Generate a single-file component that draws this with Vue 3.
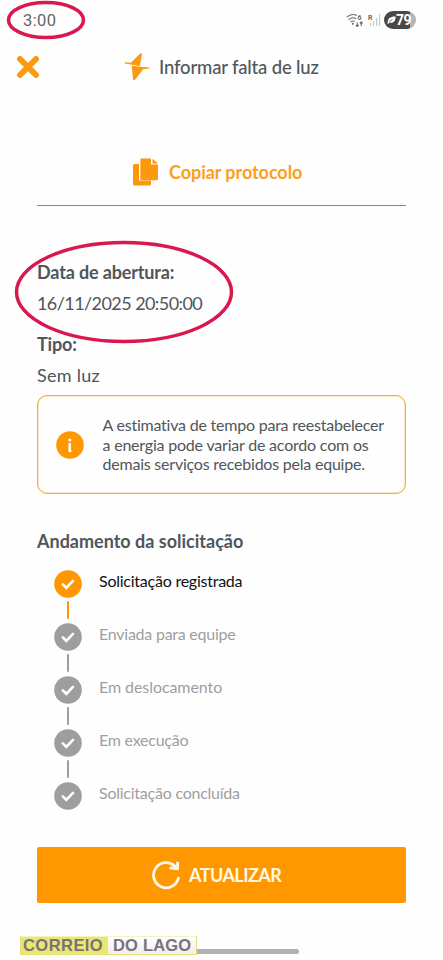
<template>
  <div class="screen">
    <div class="status-bar">
      <span class="time">3:00</span>
      <div class="status-icons">
        <svg class="wifi" width="19" height="15" viewBox="0 0 19 15" fill="none" stroke="#6b6b6b" stroke-width="1.1">
          <path d="M.8 4.2C3.600 1.500 7.800 1 11 2.600M2.600 6.600c2-1.900 5.200-2.200 7.600-.9M4.500 8.900c1.300-1 2.900-1.100 4.200-.5" />
          <circle cx="6.800" cy="10.800" r=".5" fill="#6b6b6b" />
          <path d="M11.300 9.500v4M9.900 12l1.400 1.500 1.400-1.500M15.200 13v-4M13.800 10.400l1.400-1.500 1.400 1.500" />
          <text class="tiny" x="11.600" y="6.600">6</text>
        </svg>
        <svg class="signal" width="13" height="14" viewBox="0 0 13 14" fill="#c9c9c9">
          <path d="M2 10h1.200v3H2zM5 8h1.200v5H5zM8 5h1.200v8H8zM11 1h1.200v12H11z" />
          <text class="tiny" x="0" y="6.500">R</text>
        </svg>
        <div class="battery">
          <svg width="9" height="10" viewBox="0 0 10 10">
            <path d="M1 6.500C1 2.500 4.500 1.200 9.600 1 9.600 6 7 9 3.200 7.700L1.300 9.300.3 8.500z" fill="#fff" />
            <path d="M2.600 6.800 6 4.400" stroke="#484848" stroke-width=".9" />
          </svg>
          <span>79</span>
        </div>
      </div>
    </div>

    <header class="header">
      <button class="close" @click="visible = false">
        <svg width="24" height="24" viewBox="0 0 24 24" stroke="#fb990f" stroke-width="6">
          <path d="M4 4 20 20M20 4 4 20" stroke-linecap="round" />
        </svg>
      </button>
      <svg class="bolt" width="26" height="28" viewBox="0 0 26 28" fill="#fb990f">
        <path d="M.8 9.200 7 9.800 16.200.6q1.900-.8 1.700 1.200L15.900 13 .8 10.500z" />
        <path d="M7.600 12.600 15.900 13.800 25.200 14.400v1.200L19.200 16.200 10.800 26.900q-1.600 1.100-1.700-.9z" />
      </svg>
      <h1>Informar falta de luz</h1>
    </header>

    <main class="content">
      <button class="copy">
        <svg width="26" height="29" viewBox="0 0 26 29" fill="#fc980b">
          <path d="M1.500 6H6v16.500h12V26a1.500 1.500 0 0 1-1.500 1.500h-15A1.500 1.500 0 0 1 0 26V7.500A1.500 1.500 0 0 1 1.500 6z" />
          <path d="M8.700.5H18v6h7V21a1.300 1.300 0 0 1-1.300 1.300h-15A1.300 1.300 0 0 1 7.400 21V1.800A1.300 1.300 0 0 1 8.700.5z" />
          <path d="M19.500.7 25 5.500h-5.500z" />
        </svg>
        <span>Copiar protocolo</span>
      </button>

      <section class="details">
        <strong class="label-date">Data de abertura:</strong>
        <p class="date">16/11/2025 20:50:00</p>
        <strong class="label-type">Tipo:</strong>
        <p class="type">Sem luz</p>
        <svg class="mark mark-date" width="220" height="106" viewBox="0 0 220 106">
          <ellipse cx="110" cy="53" rx="107.500" ry="49.500" />
        </svg>
      </section>

      <section class="notice">
        <svg width="28" height="28" viewBox="0 0 28 28">
          <circle cx="14" cy="14" r="13.800" fill="#ff9800" />
          <circle cx="13.800" cy="9" r="1.500" fill="#fff" />
          <path d="M12.300 12.200h2.700v7.300h.5V21h-3v-7.300h-.2z" fill="#fff" />
        </svg>
        <p>
          <span class="n1">A estimativa de tempo para reestabelecer</span>
          <span class="n2">a energia pode variar de acordo com os</span>
          <span class="n3">demais serviços recebidos pela equipe.</span>
        </p>
      </section>

      <h2>Andamento da solicitação</h2>

      <ul class="steps">
        <li v-for="step in steps" :key="step.id" :class="[step.id, { done: step.done }]">
          <div class="rail">
            <svg width="28" height="28" viewBox="0 0 28 28">
              <circle cx="14" cy="14" r="13.800" fill="currentColor" />
              <path d="M8.800 14.400 12.300 17.800 19 10.900" fill="none" stroke="#fff" stroke-width="2.600" stroke-linecap="round" />
            </svg>
            <i></i>
          </div>
          <span>{{ step.text }}</span>
        </li>
      </ul>

      <button class="refresh">
        <svg width="30" height="30" viewBox="0 0 30 30" fill="none" stroke="#fff8e6" stroke-width="2.800">
          <path d="M23.800 6A12.600 12.600 0 1 0 27.400 18.200" stroke-linecap="round" />
          <path d="M26.600 1.800v7l-8.200-1" stroke-linejoin="round" />
          <path d="M21.500 4.500l4 4" />
        </svg>
        <span>ATUALIZAR</span>
      </button>
    </main>

    <svg class="mark mark-time" width="80" height="40" viewBox="0 0 80 40">
      <ellipse cx="40" cy="20" rx="37.500" ry="17.500" />
    </svg>
    <div class="home-bar"></div>
    <div class="watermark"><span class="w1">CORREIO</span><span class="w2">DO LAGO</span></div>
  </div>
</template>

<script setup>
import { ref } from 'vue'

const visible = ref(true)

const steps = ref([
  { id: 'registered', text: 'Solicitação registrada', done: true },
  { id: 'sent', text: 'Enviada para equipe', done: false },
  { id: 'moving', text: 'Em deslocamento', done: false },
  { id: 'running', text: 'Em execução', done: false },
  { id: 'finished', text: 'Solicitação concluída', done: false }
])
</script>

<style>
body {
  margin: 0;
  background: #fefefe;
}
</style>

<style scoped>
.screen {
  position: relative;
  width: 443px;
  height: 960px;
  overflow: hidden;
  background: #fefefe;
  color: #50565b;
  font-family: Lato, "Liberation Sans", sans-serif;
  font-variant-ligatures: none;
}

button {
  padding: 0;
  border: none;
  background: none;
  font-family: inherit;
  cursor: pointer;
}

h1,
h2,
p,
ul {
  margin: 0;
  padding: 0;
}

svg {
  display: block;
  flex-shrink: 0;
}

.status-bar {
  display: flex;
  justify-content: space-between;
  align-items: center;
  height: 40px;
  padding: 0 27px 0 23px;
}

.time {
  font-family: Roboto, sans-serif;
  font-size: 16.5px;
  letter-spacing: 0.4px;
  color: #666;
}

.status-icons {
  display: flex;
  align-items: center;
  gap: 3px;
}

.tiny {
  font: bold 7px Roboto, sans-serif;
  fill: #6b6b6b;
  stroke: none;
}

.battery {
  display: flex;
  align-items: center;
  box-sizing: border-box;
  width: 32px;
  height: 18px;
  padding-left: 3px;
  border-radius: 9px;
  background: linear-gradient(90deg, #484848 80%, #b5b5b5 80%);
  color: #fff;
  font: bold 14px Roboto, sans-serif;
  letter-spacing: -0.5px;
}

.header {
  display: flex;
  align-items: center;
  height: 54px;
  padding-left: 16px;
}

.bolt {
  margin-left: 84px;
}

h1 {
  margin-left: 9px;
  font-size: 18.5px;
  font-weight: 500;
  letter-spacing: -0.17px;
  white-space: nowrap;
}

.content {
  display: flex;
  flex-direction: column;
  width: 369px;
  margin-left: 37px;
}

.copy {
  display: flex;
  align-items: center;
  gap: 10px;
  height: 67px;
  margin-top: 45px;
  padding-left: 96px;
  border-bottom: 1px solid #888;
  color: #fca01c;
  font-size: 18px;
  font-weight: bold;
  letter-spacing: -0.05px;
}

.details {
  position: relative;
  display: flex;
  flex-direction: column;
  align-items: flex-start;
  box-sizing: border-box;
  height: 189px;
  padding-top: 51px;
  font-size: 18px;
  line-height: 31px;
}

.label-date {
  letter-spacing: -0.15px;
}

.label-type {
  margin-top: 10px;
  letter-spacing: -0.15px;
}

.details p {
  white-space: nowrap;
}

.date {
  letter-spacing: -0.57px;
}

.type {
  letter-spacing: 0.25px;
}

.notice {
  display: flex;
  align-items: center;
  gap: 18.5px;
  box-sizing: border-box;
  height: 99px;
  padding-left: 18px;
  border: 1px solid #eeb03f;
  border-radius: 10px;
  box-shadow: inset 0 0 0 0.5px #f5cf88;
}

.notice p {
  display: flex;
  flex-direction: column;
  align-items: flex-start;
  font-size: 16px;
  line-height: 19.5px;
  white-space: nowrap;
}

.n1 {
  letter-spacing: -0.22px;
}

.n2 {
  letter-spacing: -0.2px;
}

.n3 {
  letter-spacing: -0.22px;
}

h2 {
  align-self: flex-start;
  margin-top: 35px;
  font-size: 18px;
  line-height: 24px;
}

.steps {
  margin-top: 17px;
  padding-left: 17px;
  list-style: none;
}

.steps li {
  display: flex;
  gap: 17px;
  height: 53px;
  color: #9e9e9e;
  letter-spacing: -0.24px;
}

.steps .moving {
  letter-spacing: -0.07px;
}

.steps li > span {
  align-self: flex-start;
  font-size: 16px;
  line-height: 22px;
}

.steps .done {
  color: #ff9800;
}

.steps .done > span {
  color: #111;
}

.rail i {
  display: block;
  width: 2.5px;
  height: 18px;
  margin: 3px auto 0;
  border-radius: 1px;
  background: currentColor;
}

.steps li:last-child i {
  display: none;
}

.refresh {
  display: flex;
  align-items: center;
  gap: 8px;
  height: 56px;
  margin-top: 12px;
  padding-left: 114px;
  border-radius: 2px;
  background: #ff9800;
  color: #fff8e6;
  font-size: 18px;
  font-weight: bold;
  letter-spacing: -0.55px;
}

.mark {
  position: absolute;
  fill: none;
  stroke: #d9184f;
  stroke-width: 3.5;
}

.mark-time {
  left: 6px;
  top: 0;
}

.mark-date {
  left: -23px;
  top: 33px;
}

.home-bar {
  position: absolute;
  left: 144px;
  top: 949px;
  width: 155px;
  height: 5px;
  border-radius: 3px;
  background: #b1b1b1;
}

.watermark {
  position: absolute;
  left: 20px;
  top: 936px;
  display: flex;
  box-sizing: border-box;
  width: 177px;
  height: 19px;
  border: 1px solid #e5df7e;
  border-top-color: #f4f1c5;
  background: linear-gradient(#fff, #eeeeeb);
  color: #797180;
  font: bold 16.5px/17px "Liberation Sans", sans-serif;
  white-space: nowrap;
}

.w1 {
  width: 85px;
  padding-left: 2px;
  background: #e8e86c;
  letter-spacing: 0.45px;
}

.w2 {
  padding-left: 5px;
  letter-spacing: 0.2px;
}
</style>
